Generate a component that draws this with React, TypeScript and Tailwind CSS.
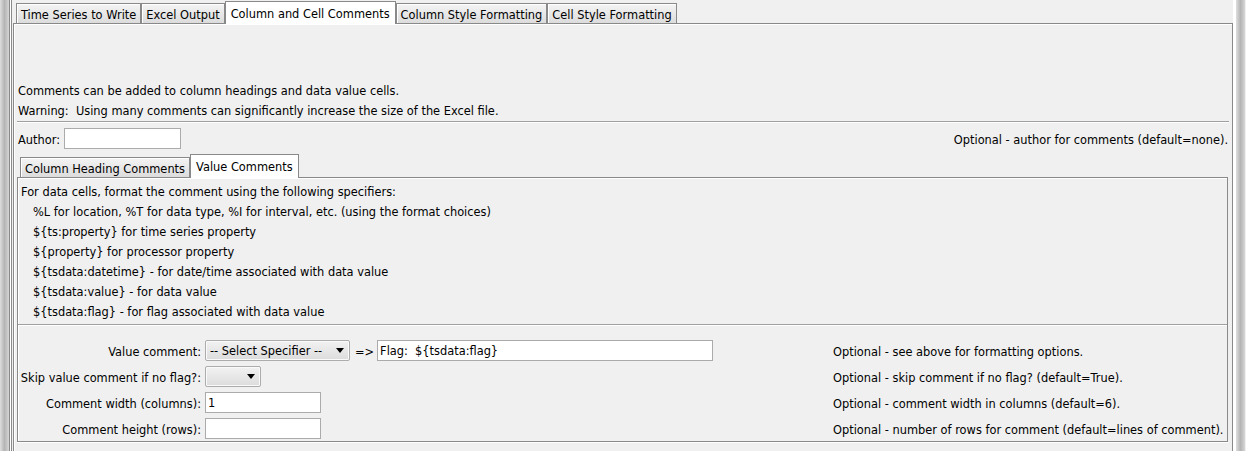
import type { ReactNode } from 'react';

const OUTER_TABS = [
  { label: 'Time Series to Write', active: false },
  { label: 'Excel Output', active: false },
  { label: 'Column and Cell Comments', active: true },
  { label: 'Column Style Formatting', active: false },
  { label: 'Cell Style Formatting', active: false },
];

const SPEC_LINES = [
  '%L for location, %T for data type, %I for interval, etc. (using the format choices)',
  '${ts:property} for time series property',
  '${property} for processor property',
  '${tsdata:datetime} - for date/time associated with data value',
  '${tsdata:value} - for data value',
  '${tsdata:flag} - for flag associated with data value',
];

function Tab({ label, active, small }: { label: string; active: boolean; small?: boolean }) {
  if (active) {
    return (
      <div
        className={[
          'relative z-10 -mb-px flex items-start border border-b-0 border-[#898989] bg-white px-[5px] pt-[3px] leading-[18px]',
          small ? 'h-[24px]' : 'h-[23px]',
        ].join(' ')}
      >
        {label}
      </div>
    );
  }
  return (
    <div className="flex h-[20px] items-start border border-b-0 border-[#898989] bg-gradient-to-b from-[#f4f4f4] to-[#dcdcdc] px-[4px] pt-[2px] leading-[18px] shadow-[inset_1px_1px_0_#ffffff]">
      {label}
    </div>
  );
}

function Arrow() {
  return (
    <svg width="8" height="5" viewBox="0 0 8 5" className="shrink-0">
      <polygon points="0,0 8,0 4,5" fill="#000" />
    </svg>
  );
}

function Select({ width, text }: { width: string; text?: string }) {
  return (
    <div
      className={[
        'flex h-[21px] items-center justify-between rounded-[2px] border border-[#acacac] bg-gradient-to-b from-[#f2f2f2] to-[#dcdcdc] pl-[4px] pr-[5px] shadow-[inset_0_0_0_1px_#fafafa]',
        width,
      ].join(' ')}
    >
      <span className="whitespace-pre pt-[2px]">{text ?? ''}</span>
      <Arrow />
    </div>
  );
}

function Field({ width, value }: { width: string; value?: string }) {
  return (
    <div
      className={[
        'flex h-[21px] items-center border border-[#ababab] bg-white pl-[2px] pt-[2px] whitespace-pre',
        width,
      ].join(' ')}
    >
      {value ?? ''}
    </div>
  );
}

function Separator() {
  return <div className="h-[2px] border-t border-b border-t-[#a0a0a0] border-b-white" />;
}

function Row({ label, children, note }: { label: string; children: ReactNode; note: string }) {
  return (
    <>
      <div className="flex h-[21px] items-center justify-end pr-[4px] pt-[4px] whitespace-nowrap">{label}</div>
      <div className="flex h-[21px] items-center">{children}</div>
      <div className="flex h-[21px] items-center pt-[4px] whitespace-nowrap">{note}</div>
    </>
  );
}

function Line({ children, indent }: { children: ReactNode; indent?: boolean }) {
  return (
    <div className={['h-[20px] whitespace-pre pt-[3px] leading-[16px]', indent ? 'pl-[12px]' : ''].join(' ')}>
      {children}
    </div>
  );
}

function SplitBar() {
  return <div className="w-[9px] shrink-0 bg-gradient-to-r from-[#dedede] via-[#b4b4b4] to-[#d6d6d6]" />;
}

export default function App() {
  return (
    <div className="flex h-[451px] w-[1246px] overflow-hidden bg-[#f0f0f0] font-['DejaVu_Sans',Verdana,sans-serif] text-[11.4px] text-black">
      <SplitBar />
      <div className="w-px shrink-0 bg-[#8a8a8a]" />
      <div className="w-px shrink-0 bg-white" />
      <div className="w-px shrink-0 bg-[#8a8a8a]" />

      {/* Outer tabbed pane */}
      <div className="ml-px flex w-[1220px] shrink-0 flex-col">
        <div className="flex h-[23px] items-end pl-[3px]">
          {OUTER_TABS.map((t) => (
            <Tab key={t.label} label={t.label} active={t.active} />
          ))}
        </div>

        <div className="flex-1 border border-b-0 border-[#898989] pl-[3px] pr-[3px] pt-[56px] shadow-[inset_1px_1px_0_#ffffff]">
          <div className="pl-[1px]">
            <Line>Comments can be added to column headings and data value cells.</Line>
            <Line>Warning:  Using many comments can significantly increase the size of the Excel file.</Line>
          </div>
          <div className="mt-px">
            <Separator />
          </div>

          <div className="mt-[5px] flex h-[21px] items-center justify-between pl-[1px]">
            <div className="flex items-center gap-[4px]">
              <span className="pt-[4px]">Author:</span>
              <Field width="w-[117px]" />
            </div>
            <span className="pr-px pt-[4px]">Optional - author for comments (default=none).</span>
          </div>

          {/* Inner tabbed pane */}
          <div className="mt-[4px] flex h-[24px] items-end pl-[3px]">
            <Tab label="Column Heading Comments" active={false} />
            <Tab label="Value Comments" active small />
          </div>
          <div className="mr-px border border-[#898989] pb-[2px] shadow-[inset_1px_1px_0_#ffffff,0_1px_0_#ffffff]">
            <div className="pl-[3px] pt-[3px]">
              <Line>For data cells, format the comment using the following specifiers:</Line>
              {SPEC_LINES.map((line) => (
                <Line key={line} indent>
                  {line}
                </Line>
              ))}
            </div>
            <div className="mt-[3px]">
              <Separator />
            </div>

            <div className="grid grid-cols-[184px_628px_1fr] gap-y-[5px] pl-[3px] pt-[14px]">
              <Row label="Value comment:" note="Optional - see above for formatting options.">
                <Select width="w-[145px]" text="-- Select Specifier --" />
                <span className="ml-[5px] mr-[3px] pt-[4px]">=&gt;</span>
                <Field width="w-[336px]" value="Flag:  ${tsdata:flag}" />
              </Row>
              <Row label="Skip value comment if no flag?:" note="Optional - skip comment if no flag? (default=True).">
                <Select width="w-[56px]" />
              </Row>
              <Row label="Comment width (columns):" note="Optional - comment width in columns (default=6).">
                <Field width="w-[116px]" value="1" />
              </Row>
              <Row label="Comment height (rows):" note="Optional - number of rows for comment (default=lines of comment).">
                <Field width="w-[116px]" />
              </Row>
            </div>
          </div>
        </div>
      </div>

      <div className="w-[3px] shrink-0 bg-white" />
      <SplitBar />
    </div>
  );
}
